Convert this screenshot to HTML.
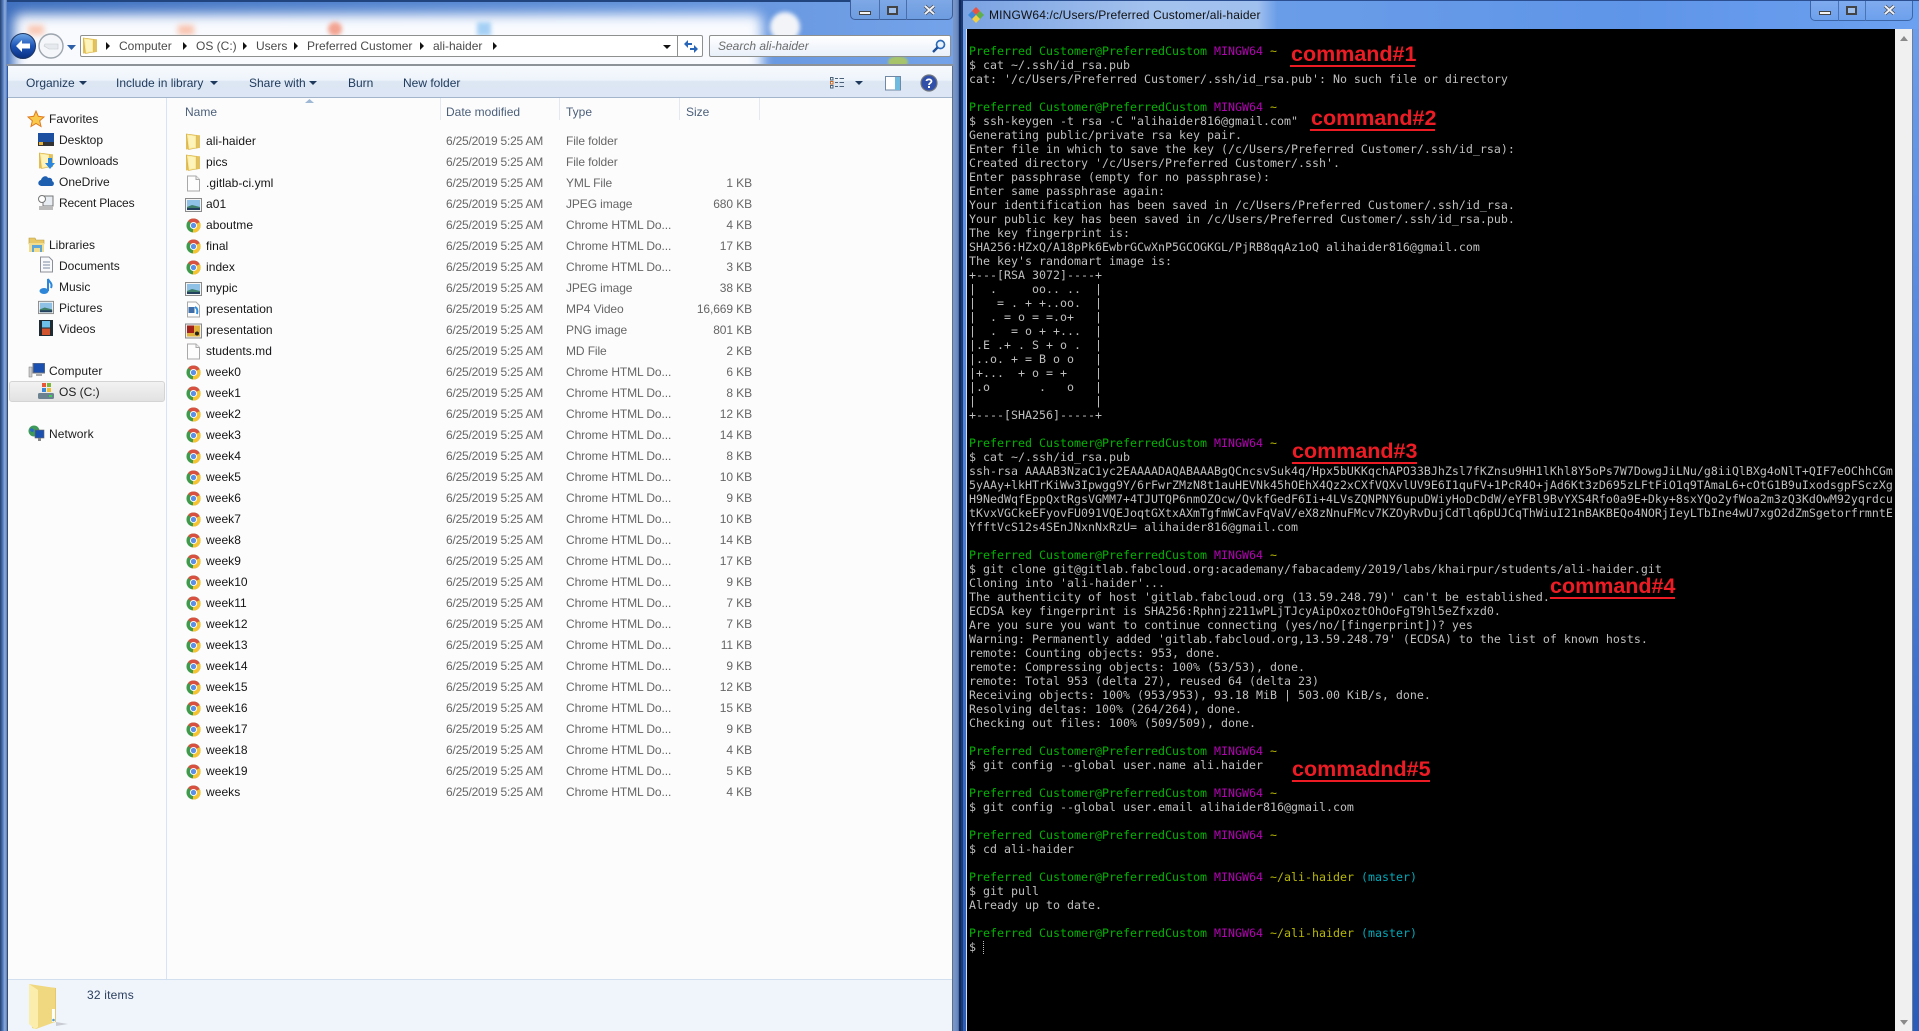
<!DOCTYPE html>
<html><head><meta charset="utf-8"><title>Explorer and MINGW64</title>
<style>
html,body{margin:0;padding:0;width:1919px;height:1031px;overflow:hidden;background:#1c3d78}
*{box-sizing:border-box}
.a{position:absolute}
body{font-family:"Liberation Sans",sans-serif;font-size:12px;position:relative}
.t{position:absolute;white-space:pre;line-height:16px;height:16px}
#list{position:absolute;left:0;top:130.5px;width:952px}
.r{position:relative;height:21px;line-height:21px;white-space:pre}
.r svg{position:absolute;left:186px;top:3px;width:15px;height:15px}
.r svg.w{left:185px;top:2px;width:17px;height:17px}
.r b,.r i,.r u,.r s{position:absolute;top:0;font-weight:normal;font-style:normal;text-decoration:none}
.r b{left:206px;color:#151515;letter-spacing:.05px}
.r i{left:446px;color:#666;letter-spacing:-.22px}
.r u{left:566px;color:#666;letter-spacing:-.1px}
.r s{right:200px;color:#666;letter-spacing:-.1px}
.n{position:absolute;color:#1c1c1c;line-height:16px;height:16px;white-space:pre}
.tb{position:absolute;top:75px;color:#1e395b;line-height:16px}
.ar{position:absolute;width:0;height:0;border-left:4px solid transparent;border-right:4px solid transparent;border-top:4px solid #1e395b}
.cr{position:absolute;top:42px;width:0;height:0;border-top:4px solid transparent;border-bottom:4px solid transparent;border-left:4px solid #111}
.ad{position:absolute;top:38px;line-height:16px;color:#4a4a4a;white-space:pre}
.h{position:absolute;top:104px;color:#4c607a;line-height:16px}
.sep{position:absolute;top:98px;width:1px;height:22px;background:#e3e9f1}
pre{position:absolute;left:969px;top:44px;margin:0;font-family:"DejaVu Sans Mono","Liberation Mono",monospace;font-size:11.63px;line-height:14px;color:#bfbfbf}
pre em{font-style:normal;color:#00b300}pre q{quotes:none;color:#b400b4}pre var{font-style:normal;color:#b8b800}pre cite{font-style:normal;color:#00a8b8}
.c{position:absolute;color:#ed1c24;font:bold 21.5px/24px "Liberation Sans",sans-serif;white-space:pre;border:0}
.ul{position:absolute;height:2px;background:#ed1c24}
</style></head><body>
<svg width="0" height="0" style="position:absolute">
<symbol id="f" viewBox="0 0 17 17"><path d="M1 .8 8 1.500V15.600L1 16.500Z" fill="#e3be55"/><path d="M7 1.500 15 2.200V15L8 15.500Z" fill="#eccb66"/><path d="M11.500 2.200 15 2.600V14.600L11.500 15.500Z" fill="#e2c160"/><path d="M1.500 1 11.500 2.500V15L3.500 16.500Z" fill="#fbe993" stroke="#d2b050" stroke-width=".6"/><path d="M3 2.400 10 3.300V14.200L4.500 15Z" fill="#fdf3bd"/></symbol>
<symbol id="d" viewBox="0 0 17 17"><path d="M2.500 1H11L14.500 4.500V16H2.500Z" fill="#fdfdfd" stroke="#a9a9a9"/><path d="M11 1V4.500H14.500" fill="#eee" stroke="#a9a9a9"/></symbol>
<symbol id="c" viewBox="0 0 16 16"><circle cx="8" cy="8" r="7.500" fill="#3f9a4a"/><path d="M8 8 14.500 4.200A7.500 7.500 0 0 1 7.300 15.500Z" fill="#f6c433"/><path d="M8 8 2.400 3A7.500 7.500 0 0 1 14.500 4.200Z" fill="#d8503f"/><circle cx="8" cy="8" r="3.800" fill="#fff"/><circle cx="8" cy="8" r="2.800" fill="#5b8fe8"/></symbol>
<symbol id="m" viewBox="0 0 17 17"><rect x=".5" y="2.500" width="16" height="13" fill="#f4f4f4" stroke="#8a8a8a"/><rect x="2" y="4" width="13" height="10" fill="#8fc0e6"/><path d="M2 11 7 9 15 11V14H2Z" fill="#3f7f6a"/><rect x="2" y="12" width="13" height="2" fill="#24405f"/></symbol>
<symbol id="v" viewBox="0 0 17 17"><path d="M2.500 1H11L14.500 4.500V16H2.500Z" fill="#fdfdfd" stroke="#a9a9a9"/><rect x="3.500" y="6" width="6" height="6" fill="#3f6ea8"/><path d="M10 6C12 7 13 9 12 13" fill="none" stroke="#2f8fe0" stroke-width="2"/></symbol>
<symbol id="p" viewBox="0 0 17 17"><rect x=".5" y="2" width="16" height="14" fill="#eee" stroke="#8a8a8a"/><rect x="2" y="3.500" width="13" height="11" fill="#e0b23a"/><path d="M2 3.500H9V11H2Z" fill="#a52218"/><circle cx="12" cy="11.500" r="2" fill="#222"/></symbol>
</svg>

<!-- explorer glass -->
<div class="a" style="left:0;top:0;width:961px;height:1031px;background:#2f5aa8"></div>
<div class="a" style="left:0;top:0;width:961px;height:65px;overflow:hidden;background:linear-gradient(90deg,#3f70bf 0,#5f8fd8 60%,#74a3ea 100%)">
 <div class="a" style="left:14px;top:14px;width:748px;height:80px;background:#f8fafe;filter:blur(6px);border-radius:8px"></div>
 <div class="a" style="left:28px;top:25px;width:16px;height:10px;background:#f9c9b6;filter:blur(3px)"></div>
 <div class="a" style="left:178px;top:25px;width:16px;height:10px;background:#f9c4b0;filter:blur(3px)"></div>
 <div class="a" style="left:328px;top:22px;width:14px;height:14px;border-radius:50%;background:#f3a492;filter:blur(2px)"></div>
 <div class="a" style="left:477px;top:22px;width:14px;height:14px;background:#a5d0f5;filter:blur(2px)"></div>
 <div class="a" style="left:770px;top:12px;width:30px;height:30px;border-radius:50%;background:#f2f4f8;filter:blur(2px)"></div>
 <div class="a" style="left:888px;top:56px;width:20px;height:12px;border-radius:50%;background:#a7c46a;filter:blur(1px)"></div>
 <div class="a" style="left:0;top:0;width:961px;height:2px;background:#21447f"></div>
</div>
<!-- explorer title buttons -->
<div class="a" style="left:850px;top:0;width:103px;height:20px;border:1px solid #3c5f9a;border-top:0;border-radius:0 0 5px 5px;background:linear-gradient(#7ea8e6,#6d9ce0)"></div>
<div class="a" style="left:879px;top:0;width:1px;height:20px;background:#4a6ea8"></div>
<div class="a" style="left:906px;top:0;width:1px;height:20px;background:#4a6ea8"></div>
<div class="a" style="left:859px;top:11px;width:12px;height:4px;background:#f4f4f4;border:1px solid #444"></div>
<div class="a" style="left:887px;top:6px;width:11px;height:9px;background:#9fc0ec;border:2px solid #444"></div>
<svg class="a" style="left:923px;top:4px" width="13" height="12"><path d="M2 2 11 10M11 2 2 10" stroke="#444" stroke-width="3.400"/><path d="M2 2 11 10M11 2 2 10" stroke="#eef2f8" stroke-width="2"/></svg>

<!-- nav buttons -->
<svg class="a" style="left:9px;top:32px" width="72" height="28">
 <defs><linearGradient id="bk" x1="0" y1="0" x2="0" y2="1"><stop offset="0" stop-color="#6fa8e8"/><stop offset=".5" stop-color="#1d55b8"/><stop offset="1" stop-color="#0a2f80"/></linearGradient></defs>
 <circle cx="14" cy="14" r="12.500" fill="url(#bk)" stroke="#1e3560"/>
 <path d="M7 14 13 8V11.500H21V16.500H13V20Z" fill="#fff"/>
 <circle cx="42" cy="14" r="12" fill="#f4f6f9" stroke="#9da5ae" stroke-width="1.400"/>
 <path d="M35 14 40 17H49V12H36Z" fill="#e6e9ee" stroke="#c4c9d0" stroke-width=".6"/>
 <path d="M58 13H67L62.500 18Z" fill="#2c5fa8"/>
</svg>
<!-- address bar -->
<div class="a" style="left:80px;top:35px;width:623px;height:22px;background:#fff;border:1px solid #8e8f8f;border-radius:2px"></div>
<div class="a" style="left:677px;top:35px;width:1px;height:22px;background:#8e8f8f"></div>
<svg class="a" style="left:82px;top:37px" width="17" height="17"><use href="#f"/></svg>
<div class="cr" style="left:106px"></div><div class="ad" style="left:119px">Computer</div>
<div class="cr" style="left:183px"></div><div class="ad" style="left:196px">OS (C:)</div>
<div class="cr" style="left:243px"></div><div class="ad" style="left:256px">Users</div>
<div class="cr" style="left:294px"></div><div class="ad" style="left:307px">Preferred Customer</div>
<div class="cr" style="left:420px"></div><div class="ad" style="left:433px">ali-haider</div>
<div class="cr" style="left:493px"></div>
<div class="ar" style="left:663px;top:45px;border-top-color:#111"></div>
<svg class="a" style="left:683px;top:39px" width="16" height="15"><path d="M1 5 5 1V4H9V6H5V9Z" fill="#2a66b8"/><path d="M15 10 11 14V11H7V9H11V6Z" fill="#2a66b8"/></svg>
<!-- search -->
<div class="a" style="left:709px;top:35px;width:242px;height:22px;background:linear-gradient(#fff,#e9f0fa);border:1px solid #8e8f8f;border-radius:2px"></div>
<div class="t" style="left:718px;top:38px;font-style:italic;color:#6d6d6d">Search ali-haider</div>
<svg class="a" style="left:931px;top:39px" width="15" height="15"><circle cx="9.500" cy="5.500" r="4" fill="#eaf3fc" stroke="#2d6bb8" stroke-width="1.700"/><path d="M6.500 8.500 2 13" stroke="#1e4f98" stroke-width="2.400"/></svg>

<!-- toolbar -->
<div class="a" style="left:7px;top:64px;width:946px;height:2px;background:#8d9298"></div>
<div class="a" style="left:8px;top:66px;width:945px;height:32px;background:linear-gradient(#f7fafe 0,#eef4fb 45%,#dde7f3 50%,#dce6f4 100%);border-bottom:1px solid #a3b5cb"></div>
<div class="tb" style="left:26px">Organize</div><div class="ar" style="left:79px;top:81px"></div>
<div class="tb" style="left:116px">Include in library</div><div class="ar" style="left:210px;top:81px"></div>
<div class="tb" style="left:249px">Share with</div><div class="ar" style="left:309px;top:81px"></div>
<div class="tb" style="left:348px">Burn</div>
<div class="tb" style="left:403px">New folder</div>
<svg class="a" style="left:829px;top:76px" width="17" height="14"><g fill="none" stroke="#4a5f78"><rect x="1.500" y="1.500" width="2.500" height="2.500" fill="#fff"/><rect x="1.500" y="5.500" width="2.500" height="2.500" fill="#fff" stroke="#c46a2a"/><rect x="1.500" y="9.500" width="2.500" height="2.500" fill="#fff"/><path d="M6 2.500H9M10.500 2.500H15M6 6.500H9M10.500 6.500H15M6 10.500H9M10.500 10.500H15"/></g></svg>
<div class="ar" style="left:855px;top:81px"></div>
<svg class="a" style="left:885px;top:76px" width="17" height="15"><rect x=".5" y=".5" width="15" height="13.500" fill="#fff" stroke="#7088a4"/><rect x="10" y="1" width="5" height="13" fill="#6fbbe0"/></svg>
<svg class="a" style="left:920px;top:74px" width="18" height="18"><circle cx="9" cy="9" r="8" fill="#2f4fa8" stroke="#6f7680" stroke-width="1.200"/><path d="M6.500 7C6.500 4.800 11.500 4.800 11.500 7.300 11.500 9 9 9 9 11" fill="none" stroke="#fff" stroke-width="1.800"/><rect x="8" y="12" width="2" height="2" fill="#fff"/></svg>

<!-- explorer body -->
<div class="a" style="left:7px;top:98px;width:1px;height:933px;background:#3a4b66"></div>
<div class="a" style="left:8px;top:98px;width:944px;height:881px;background:#fcfcfd"></div>
<div class="a" style="left:166px;top:98px;width:1px;height:881px;background:#d6e5f5"></div>
<div class="a" style="left:8px;top:979px;width:944px;height:52px;background:#f0f4fb;border-top:1px solid #d2dfee"></div>
<div class="a" style="left:952px;top:66px;width:1px;height:965px;background:#5c6f8c"></div>
<div class="a" style="left:953px;top:0;width:8px;height:1031px;background:linear-gradient(90deg,#7c98c8 0,#6f8fc4 40%,#5e7fb8 70%,#10285c 75%,#10285c 100%)"></div>
<div class="a" style="left:0;top:0;width:7px;height:1031px;background:linear-gradient(90deg,#2c3f63 0,#3f6ab0 30%,#8facdc 70%,#557ec0 100%)"></div>

<!-- nav pane -->
<svg class="a" style="left:27px;top:110px" width="18" height="18"><path d="M9 1 11.300 6.300 17 7 12.700 10.800 14 16.500 9 13.500 4 16.500 5.300 10.800 1 7 6.700 6.300Z" fill="#f8c94a" stroke="#e07a1e"/></svg>
<div class="n" style="left:49px;top:111px">Favorites</div>
<svg class="a" style="left:38px;top:133px" width="16" height="13"><rect width="16" height="13" fill="#1d4fa0"/><rect y="9" width="16" height="4" fill="#333"/><rect x="1" y="9" width="4" height="3" fill="#e7b53e"/></svg>
<div class="n" style="left:59px;top:132px">Desktop</div>
<svg class="a" style="left:38px;top:152px" width="17" height="17"><use href="#f"/></svg><svg class="a" style="left:45px;top:158px" width="10" height="11"><path d="M3 0H7V5H10L5 11 0 5H3Z" fill="#2b86dc"/></svg>
<div class="n" style="left:59px;top:153px">Downloads</div>
<svg class="a" style="left:38px;top:175px" width="16" height="12"><path d="M1 10C-1 7 2 5 3 5 4 1 9 0 10 3 13 2 15 5 14 6 17 7 16 11 14 11H3Z" fill="#1e5fb0"/></svg>
<div class="n" style="left:59px;top:174px">OneDrive</div>
<svg class="a" style="left:38px;top:194px" width="16" height="17"><rect x="5" y="2" width="10" height="10" fill="#e7edf3" stroke="#777"/><circle cx="4" cy="5" r="3.500" fill="#fff" stroke="#777"/><rect x="1" y="12" width="14" height="4" fill="#bbb"/></svg>
<div class="n" style="left:59px;top:195px;letter-spacing:-.15px">Recent Places</div>
<svg class="a" style="left:28px;top:237px" width="17" height="15"><path d="M1 1H7L8 3H16V7H1Z" fill="#e8c766" stroke="#b59a3e" stroke-width=".6"/><path d="M1 6H16V15H1Z" fill="#f2dc8e"/><rect x="4" y="8" width="10" height="7" fill="#5fa6d8"/><rect x="6" y="11" width="6" height="4" fill="#f2dc8e"/></svg>
<div class="n" style="left:49px;top:237px">Libraries</div>
<svg class="a" style="left:39px;top:256px" width="15" height="17"><path d="M1.500 1H10L13.500 4.500V16H1.500Z" fill="#f8f9fb" stroke="#8b8f99"/><path d="M4 6H11M4 9H11M4 12H11" stroke="#7a8aa0"/></svg>
<div class="n" style="left:59px;top:258px">Documents</div>
<svg class="a" style="left:39px;top:277px" width="15" height="18"><ellipse cx="5" cy="14" rx="4.500" ry="3" fill="#2d86d8"/><path d="M9 14V2C10 5 14 6 12 11" fill="none" stroke="#2d86d8" stroke-width="2"/></svg>
<div class="n" style="left:59px;top:279px">Music</div>
<svg class="a" style="left:38px;top:299px" width="16" height="16"><use href="#m"/></svg>
<div class="n" style="left:59px;top:300px">Pictures</div>
<svg class="a" style="left:39px;top:320px" width="14" height="16"><rect width="14" height="16" fill="#1e2b33"/><rect x="3" y="1" width="8" height="6.500" fill="#6ec0e8"/><rect x="3" y="8.500" width="8" height="6.500" fill="#d2542e"/></svg>
<div class="n" style="left:59px;top:321px">Videos</div>
<svg class="a" style="left:28px;top:363px" width="17" height="16"><rect x="1" y="4" width="3" height="10" fill="#ccc" stroke="#777" stroke-width=".5"/><rect x="5" y="0" width="12" height="10" fill="#1b4fb0" stroke="#777"/><rect x="8" y="11" width="6" height="2" fill="#aaa"/></svg>
<div class="n" style="left:49px;top:363px;letter-spacing:.1px">Computer</div>
<div class="a" style="left:9px;top:381px;width:156px;height:21px;border:1px solid #d4d4d4;border-radius:3px;background:linear-gradient(#f2f2f2,#e2e2e2)"></div>
<svg class="a" style="left:38px;top:383px" width="17" height="17"><rect x="4" y="0" width="4" height="4" fill="#e8573a"/><rect x="9" y="0" width="4" height="4" fill="#7cb63a"/><rect x="4" y="5" width="4" height="4" fill="#3a86d8"/><rect x="9" y="5" width="4" height="4" fill="#eebf30"/><rect x="0" y="10" width="16" height="6" rx="1.500" fill="#6d8290"/><rect x="11" y="12" width="3" height="2" fill="#3fd05a"/></svg>
<div class="n" style="left:59px;top:384px">OS (C:)</div>
<svg class="a" style="left:28px;top:425px" width="17" height="17"><circle cx="6" cy="6" r="5.500" fill="#3f9a5a"/><path d="M2 4C5 2 7 5 5 7 3 7 2 6 2 4Z" fill="#2a66c8"/><rect x="7" y="5" width="9" height="8" fill="#1b4fb0" stroke="#666" stroke-width=".6"/><rect x="10" y="13" width="3" height="3" fill="#888"/></svg>
<div class="n" style="left:49px;top:426px;letter-spacing:.1px">Network</div>

<!-- headers -->
<svg class="a" style="left:305px;top:99px" width="9" height="5"><path d="M4.500 0 9 4H0Z" fill="#9fb8d4"/></svg>
<div class="h" style="left:185px">Name</div><div class="sep" style="left:440px"></div>
<div class="h" style="left:446px">Date modified</div><div class="sep" style="left:559px"></div>
<div class="h" style="left:566px">Type</div><div class="sep" style="left:679px"></div>
<div class="h" style="left:686px">Size</div><div class="sep" style="left:759px"></div>

<!-- files -->
<div id="list">
<div class="r"><svg class="w"><use href="#f"/></svg><b>ali-haider</b><i>6/25/2019 5:25 AM</i><u>File folder</u></div>
<div class="r"><svg class="w"><use href="#f"/></svg><b>pics</b><i>6/25/2019 5:25 AM</i><u>File folder</u></div>
<div class="r"><svg class="w"><use href="#d"/></svg><b>.gitlab-ci.yml</b><i>6/25/2019 5:25 AM</i><u>YML File</u><s>1 KB</s></div>
<div class="r"><svg class="w"><use href="#m"/></svg><b>a01</b><i>6/25/2019 5:25 AM</i><u>JPEG image</u><s>680 KB</s></div>
<div class="r"><svg><use href="#c"/></svg><b>aboutme</b><i>6/25/2019 5:25 AM</i><u>Chrome HTML Do...</u><s>4 KB</s></div>
<div class="r"><svg><use href="#c"/></svg><b>final</b><i>6/25/2019 5:25 AM</i><u>Chrome HTML Do...</u><s>17 KB</s></div>
<div class="r"><svg><use href="#c"/></svg><b>index</b><i>6/25/2019 5:25 AM</i><u>Chrome HTML Do...</u><s>3 KB</s></div>
<div class="r"><svg class="w"><use href="#m"/></svg><b>mypic</b><i>6/25/2019 5:25 AM</i><u>JPEG image</u><s>38 KB</s></div>
<div class="r"><svg class="w"><use href="#v"/></svg><b>presentation</b><i>6/25/2019 5:25 AM</i><u>MP4 Video</u><s>16,669 KB</s></div>
<div class="r"><svg class="w"><use href="#p"/></svg><b>presentation</b><i>6/25/2019 5:25 AM</i><u>PNG image</u><s>801 KB</s></div>
<div class="r"><svg class="w"><use href="#d"/></svg><b>students.md</b><i>6/25/2019 5:25 AM</i><u>MD File</u><s>2 KB</s></div>
<div class="r"><svg><use href="#c"/></svg><b>week0</b><i>6/25/2019 5:25 AM</i><u>Chrome HTML Do...</u><s>6 KB</s></div>
<div class="r"><svg><use href="#c"/></svg><b>week1</b><i>6/25/2019 5:25 AM</i><u>Chrome HTML Do...</u><s>8 KB</s></div>
<div class="r"><svg><use href="#c"/></svg><b>week2</b><i>6/25/2019 5:25 AM</i><u>Chrome HTML Do...</u><s>12 KB</s></div>
<div class="r"><svg><use href="#c"/></svg><b>week3</b><i>6/25/2019 5:25 AM</i><u>Chrome HTML Do...</u><s>14 KB</s></div>
<div class="r"><svg><use href="#c"/></svg><b>week4</b><i>6/25/2019 5:25 AM</i><u>Chrome HTML Do...</u><s>8 KB</s></div>
<div class="r"><svg><use href="#c"/></svg><b>week5</b><i>6/25/2019 5:25 AM</i><u>Chrome HTML Do...</u><s>10 KB</s></div>
<div class="r"><svg><use href="#c"/></svg><b>week6</b><i>6/25/2019 5:25 AM</i><u>Chrome HTML Do...</u><s>9 KB</s></div>
<div class="r"><svg><use href="#c"/></svg><b>week7</b><i>6/25/2019 5:25 AM</i><u>Chrome HTML Do...</u><s>10 KB</s></div>
<div class="r"><svg><use href="#c"/></svg><b>week8</b><i>6/25/2019 5:25 AM</i><u>Chrome HTML Do...</u><s>14 KB</s></div>
<div class="r"><svg><use href="#c"/></svg><b>week9</b><i>6/25/2019 5:25 AM</i><u>Chrome HTML Do...</u><s>17 KB</s></div>
<div class="r"><svg><use href="#c"/></svg><b>week10</b><i>6/25/2019 5:25 AM</i><u>Chrome HTML Do...</u><s>9 KB</s></div>
<div class="r"><svg><use href="#c"/></svg><b>week11</b><i>6/25/2019 5:25 AM</i><u>Chrome HTML Do...</u><s>7 KB</s></div>
<div class="r"><svg><use href="#c"/></svg><b>week12</b><i>6/25/2019 5:25 AM</i><u>Chrome HTML Do...</u><s>7 KB</s></div>
<div class="r"><svg><use href="#c"/></svg><b>week13</b><i>6/25/2019 5:25 AM</i><u>Chrome HTML Do...</u><s>11 KB</s></div>
<div class="r"><svg><use href="#c"/></svg><b>week14</b><i>6/25/2019 5:25 AM</i><u>Chrome HTML Do...</u><s>9 KB</s></div>
<div class="r"><svg><use href="#c"/></svg><b>week15</b><i>6/25/2019 5:25 AM</i><u>Chrome HTML Do...</u><s>12 KB</s></div>
<div class="r"><svg><use href="#c"/></svg><b>week16</b><i>6/25/2019 5:25 AM</i><u>Chrome HTML Do...</u><s>15 KB</s></div>
<div class="r"><svg><use href="#c"/></svg><b>week17</b><i>6/25/2019 5:25 AM</i><u>Chrome HTML Do...</u><s>9 KB</s></div>
<div class="r"><svg><use href="#c"/></svg><b>week18</b><i>6/25/2019 5:25 AM</i><u>Chrome HTML Do...</u><s>4 KB</s></div>
<div class="r"><svg><use href="#c"/></svg><b>week19</b><i>6/25/2019 5:25 AM</i><u>Chrome HTML Do...</u><s>5 KB</s></div>
<div class="r"><svg><use href="#c"/></svg><b>weeks</b><i>6/25/2019 5:25 AM</i><u>Chrome HTML Do...</u><s>4 KB</s></div>
</div>

<!-- status -->
<svg class="a" style="left:26px;top:982px" width="44" height="48"><path d="M12 4 30 6V40L12 42Z" fill="#e6c76a"/><path d="M30 40 42 42 30 44Z" fill="#c9ccd3"/><path d="M3 2 29 6V40L10 47 6 46Z" fill="#f0d880"/><path d="M3 2 12 8V45L9 47 3 42Z" fill="#fbeead"/><rect x="26" y="27" width="3" height="13" fill="#fff"/><circle cx="27.500" cy="38" r="1.300" fill="#4a9be0"/></svg>
<div class="t" style="left:87px;top:987px;color:#2a3f5f;letter-spacing:.2px">32 items</div>

<!-- terminal window -->
<div class="a" style="left:961px;top:0;width:958px;height:1031px;background:linear-gradient(#6f9fe8 0,#5f92e6 200px,#2f62c0 900px,#2a5cb8 100%)"></div>
<div class="a" style="left:961px;top:0;width:958px;height:29px;background:linear-gradient(90deg,#7aa2e2 0,#a4c2ee 20%,#a0c0ee 31%,#6a9de8 33%,#5f95e8 70%,#6ca0f0 100%);border-top:1px solid #2b4f90"></div>
<div class="a" style="left:961px;top:0;width:2px;height:1031px;background:#1c3a70"></div>
<div class="a" style="left:966px;top:29px;width:1px;height:1002px;background:#cfe0f8"></div>
<svg class="a" style="left:968px;top:7px" width="16" height="16"><path d="M8 0 12 4 8 8 4 4Z" fill="#e8543f"/><path d="M12 4 16 8 12 12 8 8Z" fill="#5fb04a"/><path d="M4 4 8 8 4 12 0 8Z" fill="#3f87d8"/><path d="M8 8 12 12 8 16 4 12Z" fill="#f2d040"/></svg>
<div class="t" style="left:989px;top:7px;color:#111;letter-spacing:.15px">MINGW64:/c/Users/Preferred Customer/ali-haider</div>
<div class="a" style="left:1810px;top:1px;width:103px;height:20px;border:1px solid #3d66a8;border-top:0;border-radius:0 0 5px 5px;background:linear-gradient(#7fabef,#6da0ec)"></div>
<div class="a" style="left:1838px;top:1px;width:1px;height:20px;background:#4a73b4"></div>
<div class="a" style="left:1865px;top:1px;width:1px;height:20px;background:#4a73b4"></div>
<div class="a" style="left:1819px;top:11px;width:12px;height:4px;background:#f4f4f4;border:1px solid #444"></div>
<div class="a" style="left:1846px;top:6px;width:11px;height:9px;background:#9fc0ec;border:2px solid #444"></div>
<svg class="a" style="left:1883px;top:4px" width="13" height="12"><path d="M2 2 11 10M11 2 2 10" stroke="#444" stroke-width="3.400"/><path d="M2 2 11 10M11 2 2 10" stroke="#eef2f8" stroke-width="2"/></svg>
<div class="a" style="left:967px;top:29px;width:928px;height:1002px;background:#000"></div>
<div class="a" style="left:1895px;top:29px;width:18px;height:1002px;background:#f0f0f0;border-right:1px solid #6a7f9e"></div>
<svg class="a" style="left:1899px;top:36px" width="10" height="6"><path d="M5 0 9 5H1Z" fill="#8a8a8a"/></svg>
<svg class="a" style="left:1899px;top:1020px" width="10" height="6"><path d="M5 5 9 0H1Z" fill="#8a8a8a"/></svg>

<pre><em>Preferred Customer@PreferredCustom</em> <q>MINGW64</q> <var>~</var>
$ cat ~/.ssh/id_rsa.pub
cat: '/c/Users/Preferred Customer/.ssh/id_rsa.pub': No such file or directory

<em>Preferred Customer@PreferredCustom</em> <q>MINGW64</q> <var>~</var>
$ ssh-keygen -t rsa -C "alihaider816@gmail.com"
Generating public/private rsa key pair.
Enter file in which to save the key (/c/Users/Preferred Customer/.ssh/id_rsa):
Created directory '/c/Users/Preferred Customer/.ssh'.
Enter passphrase (empty for no passphrase):
Enter same passphrase again:
Your identification has been saved in /c/Users/Preferred Customer/.ssh/id_rsa.
Your public key has been saved in /c/Users/Preferred Customer/.ssh/id_rsa.pub.
The key fingerprint is:
SHA256:HZxQ/A18pPk6EwbrGCwXnP5GCOGKGL/PjRB8qqAz1oQ alihaider816@gmail.com
The key's randomart image is:
+---[RSA 3072]----+
|  .     oo.. ..  |
|   = . + +..oo.  |
|  . = o = =.o+   |
|  .  = o + +...  |
|.E .+ . S + o .  |
|..o. + = B o o   |
|+...  + o = +    |
|.o       .   o   |
|                 |
+----[SHA256]-----+

<em>Preferred Customer@PreferredCustom</em> <q>MINGW64</q> <var>~</var>
$ cat ~/.ssh/id_rsa.pub
ssh-rsa AAAAB3NzaC1yc2EAAAADAQABAAABgQCncsvSuk4q/Hpx5bUKKqchAPO33BJhZsl7fKZnsu9HH1lKhl8Y5oPs7W7DowgJiLNu/g8iiQlBXg4oNlT+QIF7eOChhCGm
5yAAy+lkHTrKiWw3Ipwgg9Y/6rFwrZMzN8t1auHEVNk45hOEhX4Qz2xCXfVQXvlUV9E6I1quFV+1PcR4O+jAd6Kt3zD695zLFtFiO1q9TAmaL6+cOtG1B9uIxodsgpFSczXg
H9NedWqfEppQxtRgsVGMM7+4TJUTQP6nmOZOcw/QvkfGedF6Ii+4LVsZQNPNY6upuDWiyHoDcDdW/eYFBl9BvYXS4Rfo0a9E+Dky+8sxYQo2yfWoa2m3zQ3KdOwM92yqrdcu
tKvxVGCkeEFyovFU091VQEJoqtGXtxAXmTgfmWCavFqVaV/eX8zNnuFMcv7KZOyRvDujCdTlq6pUJCqThWiuI21nBAKBEQo4NORjIeyLTbIne4wU7xgO2dZmSgetorfrmntE
YfftVcS12s4SEnJNxnNxRzU= alihaider816@gmail.com

<em>Preferred Customer@PreferredCustom</em> <q>MINGW64</q> <var>~</var>
$ git clone git@gitlab.fabcloud.org:academany/fabacademy/2019/labs/khairpur/students/ali-haider.git
Cloning into 'ali-haider'...
The authenticity of host 'gitlab.fabcloud.org (13.59.248.79)' can't be established.
ECDSA key fingerprint is SHA256:Rphnjz211wPLjTJcyAipOxoztOhOoFgT9hl5eZfxzd0.
Are you sure you want to continue connecting (yes/no/[fingerprint])? yes
Warning: Permanently added 'gitlab.fabcloud.org,13.59.248.79' (ECDSA) to the list of known hosts.
remote: Counting objects: 953, done.
remote: Compressing objects: 100% (53/53), done.
remote: Total 953 (delta 27), reused 64 (delta 23)
Receiving objects: 100% (953/953), 93.18 MiB | 503.00 KiB/s, done.
Resolving deltas: 100% (264/264), done.
Checking out files: 100% (509/509), done.

<em>Preferred Customer@PreferredCustom</em> <q>MINGW64</q> <var>~</var>
$ git config --global user.name ali.haider

<em>Preferred Customer@PreferredCustom</em> <q>MINGW64</q> <var>~</var>
$ git config --global user.email alihaider816@gmail.com

<em>Preferred Customer@PreferredCustom</em> <q>MINGW64</q> <var>~</var>
$ cd ali-haider

<em>Preferred Customer@PreferredCustom</em> <q>MINGW64</q> <var>~/ali-haider</var> <cite>(master)</cite>
$ git pull
Already up to date.

<em>Preferred Customer@PreferredCustom</em> <q>MINGW64</q> <var>~/ali-haider</var> <cite>(master)</cite>
$</pre>
<div class="a" style="left:983px;top:941px;width:1px;height:13px;background:repeating-linear-gradient(#bfbfbf 0 1px,transparent 1px 2px)"></div>

<!-- annotations -->
<div class="c" style="left:1291px;top:42px">command#1</div><div class="ul" style="left:1290px;top:65px;width:125px"></div>
<div class="c" style="left:1311px;top:106px">command#2</div><div class="ul" style="left:1310px;top:129px;width:125px"></div>
<div class="c" style="left:1292px;top:439px">command#3</div><div class="ul" style="left:1292px;top:462px;width:125px"></div>
<div class="c" style="left:1550px;top:574px">command#4</div><div class="ul" style="left:1550px;top:597px;width:125px"></div>
<div class="c" style="left:1292px;top:757px">commadnd#5</div><div class="ul" style="left:1292px;top:780px;width:138px"></div>
</body></html>
